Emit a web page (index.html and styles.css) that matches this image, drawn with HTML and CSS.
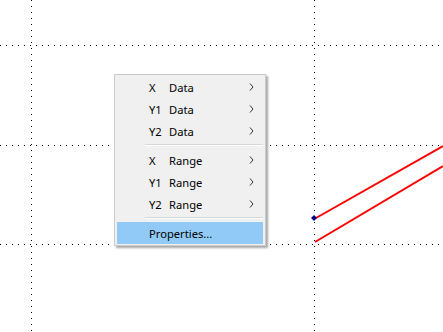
FILE: index.html
```html
<!DOCTYPE html>
<html lang="en">
<head>
    <meta charset="UTF-8">
    <title>Plot</title>
    <link rel="stylesheet" href="styles.css">
</head>
<body>
    <div class="plot">
        <svg class="canvas" width="443" height="332" viewBox="0 0 443 332">
            <!-- grid -->
            <g class="grid">
                <line x1="31.5" y1="0" x2="31.5" y2="332"/>
                <line x1="314.5" y1="0" x2="314.5" y2="332"/>
                <line x1="0" y1="45.5" x2="443" y2="45.5"/>
                <line x1="0" y1="145.5" x2="443" y2="145.5"/>
                <line x1="0" y1="244.5" x2="443" y2="244.5"/>
            </g>
            <!-- series -->
            <line class="trace" x1="316" y1="218" x2="443" y2="146"/>
            <line class="trace" x1="315" y1="242" x2="443" y2="166"/>
            <polygon class="marker" points="314,215 317,218 314,221 311,218"/>
        </svg>

        <div class="menu">
            <div class="item"><span class="axis">X</span><span class="label">Data</span><svg class="arrow" width="5" height="8"><path d="M1 0.5 L4 4 L1 7.5"/></svg></div>
            <div class="item"><span class="axis">Y1</span><span class="label">Data</span><svg class="arrow" width="5" height="8"><path d="M1 0.5 L4 4 L1 7.5"/></svg></div>
            <div class="item"><span class="axis">Y2</span><span class="label">Data</span><svg class="arrow" width="5" height="8"><path d="M1 0.5 L4 4 L1 7.5"/></svg></div>
            <div class="sep"></div>
            <div class="item"><span class="axis">X</span><span class="label">Range</span><svg class="arrow" width="5" height="8"><path d="M1 0.5 L4 4 L1 7.5"/></svg></div>
            <div class="item"><span class="axis">Y1</span><span class="label">Range</span><svg class="arrow" width="5" height="8"><path d="M1 0.5 L4 4 L1 7.5"/></svg></div>
            <div class="item"><span class="axis">Y2</span><span class="label">Range</span><svg class="arrow" width="5" height="8"><path d="M1 0.5 L4 4 L1 7.5"/></svg></div>
            <div class="sep"></div>
            <div class="item active"><span class="label">Properties...</span></div>
        </div>
    </div>
</body>
</html>
```
FILE: styles.css
```css
body { margin: 0; background: white; font-family: "Noto Sans", "Open Sans", sans-serif; }
.plot { position: relative; width: 443px; height: 332px; overflow: hidden; }
.canvas { display: block; }
.grid line { stroke: #000; stroke-width: 1; stroke-dasharray: 1 5; shape-rendering: crispEdges; }
.trace { stroke: #ff0000; stroke-width: 2; }
.marker { fill: #000080; }

.menu { position: absolute; left: 114px; top: 74px; width: 146px; padding: 1px 2px; background: #f0f0f0; border: 1px solid #cccccc; box-shadow: 2px 2px 2px rgba(0,0,0,0.35); font-size: 11.2px; color: #000; }
.item { display: flex; align-items: center; height: 22px; padding-left: 32px; padding-right: 9px; }
.item .axis { width: 20px; }
.item .label { flex: 1; }
.item .arrow { fill: none; stroke: #333; stroke-width: 1; }
.item.active { background: #91c9f7; }
.sep { height: 1px; margin: 2px 0 3px 28px; background: #d7d7d7; border-bottom: 1px solid #fff; }
```
